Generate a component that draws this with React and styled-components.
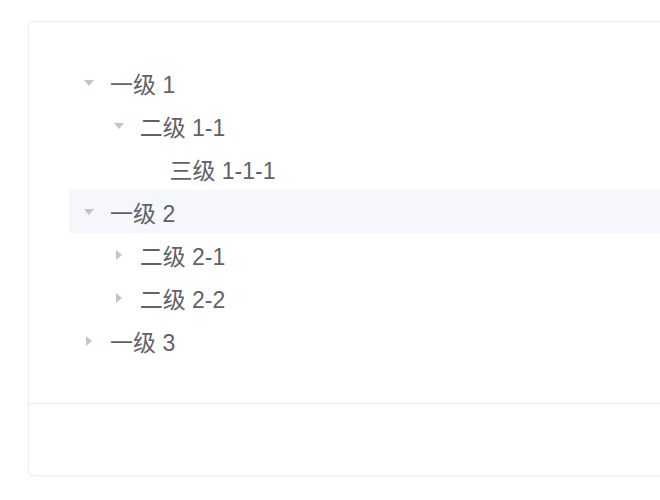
import React, { useState } from "react";
import styled, { createGlobalStyle } from "styled-components";

const GlobalStyle = createGlobalStyle`
  html, body {
    margin: 0;
    padding: 0;
    background: #ffffff;
    overflow: hidden;
  }
  body {
    font-family: "Liberation Sans", Arial, "Noto Sans CJK SC", sans-serif;
  }
`;

const Page = styled.div`
  width: 660px;
  height: 500px;
  box-sizing: border-box;
  padding: 21px 0 0 28px;
  overflow: hidden;
`;

const Card = styled.div`
  width: 680px;
  border: 1px solid #ebeef5;
  border-radius: 5px;
  background: #fff;
  box-shadow: 0 1px 2px rgba(0, 0, 0, 0.04);
  overflow: hidden;
`;

const CardBody = styled.div`
  padding: 39px 0 41px 40px;
  border-bottom: 1px solid #ebeef5;
`;

const CardFooter = styled.div`
  height: 71px;
`;

const TreeList = styled.div`
  display: flex;
  flex-direction: column;
`;

const NodeRow = styled.div`
  display: flex;
  align-items: center;
  height: 43px;
  padding-left: ${(p) => p.$level * 29.7}px;
  background: ${(p) => (p.$active ? "#f5f7fa" : "transparent")};
  cursor: pointer;
  color: #606266;
  font-size: 23px;
`;

const CaretBox = styled.span`
  display: flex;
  align-items: center;
  justify-content: center;
  width: 40px;
  height: 40px;
  flex: none;
  visibility: ${(p) => (p.$leaf ? "hidden" : "visible")};
  svg {
    transform: rotate(${(p) => (p.$open ? 90 : 0)}deg);
    transition: transform 0.2s;
  }
`;

const Label = styled.span`
  white-space: nowrap;
  padding-left: 1px;
`;

const data = [
  {
    id: "1",
    label: "一级 1",
    children: [
      { id: "1-1", label: "二级 1-1", children: [{ id: "1-1-1", label: "三级 1-1-1" }] },
    ],
  },
  {
    id: "2",
    label: "一级 2",
    children: [
      { id: "2-1", label: "二级 2-1", children: [{ id: "2-1-1", label: "三级 2-1-1" }] },
      { id: "2-2", label: "二级 2-2", children: [{ id: "2-2-1", label: "三级 2-2-1" }] },
    ],
  },
  {
    id: "3",
    label: "一级 3",
    children: [{ id: "3-1", label: "二级 3-1" }],
  },
];

function Caret() {
  return (
    <svg width="6" height="10" viewBox="0 0 6 10">
      <polygon points="0,0 6,5 0,10" fill="#c0c4cc" />
    </svg>
  );
}

function TreeNode({ node, level, expanded, toggle, active }) {
  const leaf = !node.children || node.children.length === 0;
  const open = expanded.has(node.id);
  return (
    <>
      <NodeRow $level={level} $active={active === node.id} onClick={() => toggle(node.id)}>
        <CaretBox $leaf={leaf} $open={open}>
          <Caret />
        </CaretBox>
        <Label>{node.label}</Label>
      </NodeRow>
      {open &&
        !leaf &&
        node.children.map((c) => (
          <TreeNode
            key={c.id}
            node={c}
            level={level + 1}
            expanded={expanded}
            toggle={toggle}
            active={active}
          />
        ))}
    </>
  );
}

export default function App() {
  const [expanded, setExpanded] = useState(new Set(["1", "1-1", "2"]));
  const [active, setActive] = useState("2");
  const toggle = (id) => {
    setActive(id);
    setExpanded((prev) => {
      const next = new Set(prev);
      if (next.has(id)) next.delete(id);
      else next.add(id);
      return next;
    });
  };
  return (
    <>
      <GlobalStyle />
      <Page>
        <Card>
          <CardBody>
            <TreeList>
              {data.map((n) => (
                <TreeNode
                  key={n.id}
                  node={n}
                  level={0}
                  expanded={expanded}
                  toggle={toggle}
                  active={active}
                />
              ))}
            </TreeList>
          </CardBody>
          <CardFooter />
        </Card>
      </Page>
    </>
  );
}
